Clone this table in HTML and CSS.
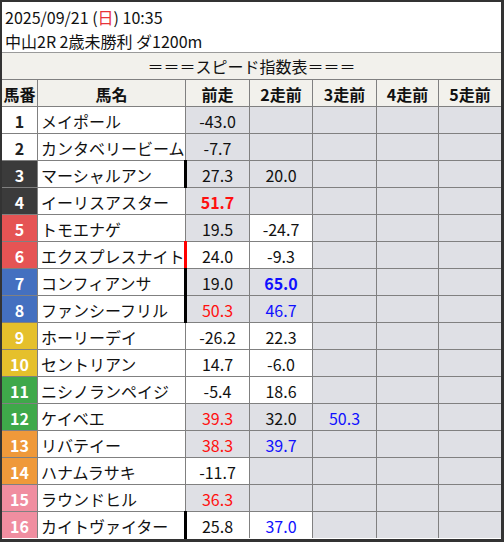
FILE: index.html
```html
<!DOCTYPE html>
<html lang="ja">
<head>
<meta charset="utf-8">
<link rel="stylesheet" href="styles.css">
</head>
<body>
<div class="sheet">
  <div class="info">
    <div>2025/09/21 (<span class="sun">日</span>) 10:35</div>
    <div>中山2R 2歳未勝利 ダ1200m</div>
  </div>
  <div class="title">＝＝＝スピード指数表＝＝＝</div>
  <div class="grid">
    <div class="hd">馬番</div><div class="hd">馬名</div><div class="hd">前走</div><div class="hd">2走前</div><div class="hd">3走前</div><div class="hd">4走前</div><div class="hd">5走前</div>

    <div class="num w1">1</div><div class="name">メイポール</div><div class="v g">-43.0</div><div class="v g"></div><div class="v g"></div><div class="v g"></div><div class="v g"></div>
    <div class="num w1">2</div><div class="name">カンタベリービーム</div><div class="v g">-7.7</div><div class="v g"></div><div class="v g"></div><div class="v g"></div><div class="v g"></div>
    <div class="num k">3</div><div class="name">マーシャルアン</div><div class="v g bar">27.3</div><div class="v g">20.0</div><div class="v g"></div><div class="v g"></div><div class="v g"></div>
    <div class="num k">4</div><div class="name">イーリスアスター</div><div class="v g red b">51.7</div><div class="v g"></div><div class="v g"></div><div class="v g"></div><div class="v g"></div>
    <div class="num r">5</div><div class="name">トモエナゲ</div><div class="v g">19.5</div><div class="v">-24.7</div><div class="v g"></div><div class="v g"></div><div class="v g"></div>
    <div class="num r">6</div><div class="name">エクスプレスナイト</div><div class="v bar rbar">24.0</div><div class="v">-9.3</div><div class="v g"></div><div class="v g"></div><div class="v g"></div>
    <div class="num bl">7</div><div class="name">コンフィアンサ</div><div class="v g bar">19.0</div><div class="v g blue b">65.0</div><div class="v g"></div><div class="v g"></div><div class="v g"></div>
    <div class="num bl">8</div><div class="name">ファンシーフリル</div><div class="v g bar red">50.3</div><div class="v g blue">46.7</div><div class="v g"></div><div class="v g"></div><div class="v g"></div>
    <div class="num y">9</div><div class="name">ホーリーデイ</div><div class="v">-26.2</div><div class="v">22.3</div><div class="v g"></div><div class="v g"></div><div class="v g"></div>
    <div class="num y">10</div><div class="name">セントリアン</div><div class="v">14.7</div><div class="v">-6.0</div><div class="v g"></div><div class="v g"></div><div class="v g"></div>
    <div class="num gr">11</div><div class="name">ニシノランペイジ</div><div class="v">-5.4</div><div class="v">18.6</div><div class="v g"></div><div class="v g"></div><div class="v g"></div>
    <div class="num gr">12</div><div class="name">ケイベエ</div><div class="v g red">39.3</div><div class="v g">32.0</div><div class="v g blue">50.3</div><div class="v g"></div><div class="v g"></div>
    <div class="num o">13</div><div class="name">リバテイー</div><div class="v g red">38.3</div><div class="v g blue">39.7</div><div class="v g"></div><div class="v g"></div><div class="v g"></div>
    <div class="num o">14</div><div class="name">ハナムラサキ</div><div class="v">-11.7</div><div class="v g"></div><div class="v g"></div><div class="v g"></div><div class="v g"></div>
    <div class="num p">15</div><div class="name">ラウンドヒル</div><div class="v g red">36.3</div><div class="v g"></div><div class="v g"></div><div class="v g"></div><div class="v g"></div>
    <div class="num p">16</div><div class="name">カイトヴァイター</div><div class="v bar">25.8</div><div class="v blue">37.0</div><div class="v g"></div><div class="v g"></div><div class="v g"></div>
  </div>
</div>
</body>
</html>
```
FILE: styles.css
```css
html, body {
  margin: 0;
  padding: 0;
  background: #fff;
}
body {
  font-family: "Noto Sans CJK JP", "Noto Sans", sans-serif;
  font-size: 16px;
  color: #111;
}
.sheet {
  width: 504px;
  height: 542px;
  box-sizing: border-box;
  border-style: solid;
  border-color: #333;
  border-width: 2px 3px 3px 2px;
  background: #fff;
  overflow: hidden;
}
.info {
  height: 51px;
  box-sizing: border-box;
  padding: 3px 0 0 3px;
  line-height: 24px;
  border-bottom: 1px solid #9a9a9a;
}
.sun {
  color: #e8333a;
}
.title {
  height: 26px;
  line-height: 26px;
  text-align: center;
  background: #f2f1ec;
  border-bottom: 1px solid #808080;
}
.grid {
  display: grid;
  grid-template-columns: 35px 147px 63px 62px 63px 61px 62px;
  grid-auto-rows: 26px;
  gap: 1px;
  background: #808080;
}
.grid > div {
  box-sizing: border-box;
  padding-top: 1px;
  line-height: 26px;
  background: #fff;
  white-space: nowrap;
  overflow: visible;
}
.hd {
  background: #f2f1ec !important;
  font-weight: bold;
  text-align: center;
}
.num {
  text-align: center;
  font-weight: bold;
  color: #fff;
}
.num.w1 { background: #fff !important; color: #222; }
.num.k { background: #3b3b3b !important; }
.num.r { background: #e55454 !important; }
.num.bl { background: #4470c0 !important; }
.num.y { background: #e5c02c !important; }
.num.gr { background: #3fa84a !important; }
.num.o { background: #ef993a !important; }
.num.p { background: #f08ea0 !important; }
.name {
  padding-left: 3px;
  overflow: hidden !important;
}
.v {
  text-align: center;
  position: relative;
}
.v.g { background: #dfe0e5 !important; }
.red { color: #ff1010; }
.blue { color: #1010ff; }
.b { font-weight: bold; }
.bar::before {
  content: "";
  position: absolute;
  left: -2px;
  top: -1px;
  bottom: -1px;
  width: 3px;
  background: #000;
}
.rbar::before {
  background: #ff0000;
}
```
